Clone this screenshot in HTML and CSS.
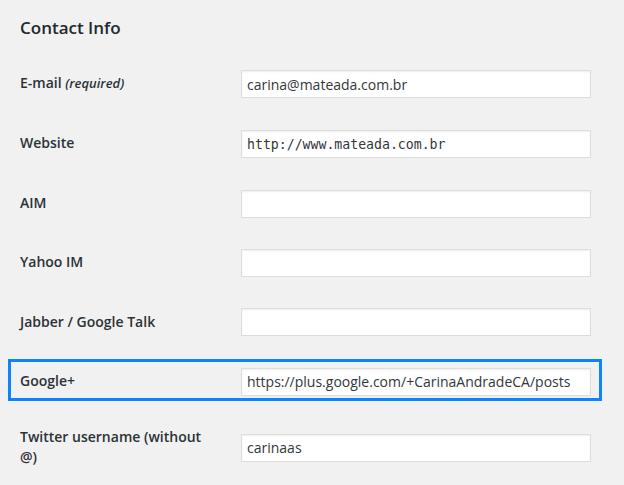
FILE: index.html
```html
<!DOCTYPE html>
<html lang="en">
<head>
<meta charset="utf-8">
<title>Contact Info</title>
<link rel="stylesheet" href="styles.css">
</head>
<body>
<main class="page">
  <h2 class="title">Contact Info</h2>
  <div class="form">
    <div class="row">
      <label class="label" for="email">E-mail <em class="req">(required)</em></label>
      <div class="field"><input class="input" id="email" type="text" value="carina@mateada.com.br"></div>
    </div>
    <div class="row">
      <label class="label" for="url">Website</label>
      <div class="field"><input class="input input-code" id="url" type="text" value="http://www.mateada.com.br"></div>
    </div>
    <div class="row">
      <label class="label" for="aim">AIM</label>
      <div class="field"><input class="input" id="aim" type="text" value=""></div>
    </div>
    <div class="row">
      <label class="label" for="yim">Yahoo IM</label>
      <div class="field"><input class="input" id="yim" type="text" value=""></div>
    </div>
    <div class="row">
      <label class="label" for="jabber">Jabber / Google Talk</label>
      <div class="field"><input class="input" id="jabber" type="text" value=""></div>
    </div>
    <div class="row row-hl">
      <label class="label" for="gplus">Google+</label>
      <div class="field"><input class="input" id="gplus" type="text" value="https://plus.google.com/+CarinaAndradeCA/posts"></div>
    </div>
    <div class="row">
      <label class="label" for="twitter">Twitter username (without @)</label>
      <div class="field"><input class="input" id="twitter" type="text" value="carinaas"></div>
    </div>
  </div>
</main>
</body>
</html>
```

FILE: styles.css
```css
html, body {
  margin: 0;
  padding: 0;
  background: #f1f1f1;
}
body {
  font-family: "Open Sans", "DejaVu Sans", sans-serif;
  font-size: 14px;
  color: #23282d;
  overflow: hidden;
}
.page {
  padding: 17px 0 0 20px;
}
.title {
  margin: 0 0 15px 0;
  font-size: 17px;
  line-height: 22px;
  font-weight: 600;
  color: #23282d;
}
.form {
  display: flex;
  flex-direction: column;
  width: 571px;
}
.row {
  position: relative;
  display: flex;
  align-items: center;
}
.row-hl::before {
  content: "";
  position: absolute;
  left: -12px;
  right: -11px;
  top: 7px;
  bottom: 11px;
  border: 3px solid #0a84ff;
  pointer-events: none;
}
.row-hl {
  margin-bottom: -3px;
}
.row-hl::before {
  bottom: 10px;
}
.label {
  align-self: flex-start;
  width: 200px;
  flex: 0 0 200px;
  margin-right: 21px;
  padding: 19px 0 21px;
  line-height: 19.4px;
  font-weight: 600;
  color: #2c3136;
}
.req {
  font-style: italic;
  font-weight: 600;
  font-size: 13px;
}
.field {
  flex: 1;
  padding: 15px 0;
}
.input {
  display: block;
  box-sizing: border-box;
  width: 350px;
  height: 28px;
  margin: 0;
  padding: 3px 5px;
  border: 1px solid #ddd;
  border-radius: 0;
  background: #fff;
  box-shadow: inset 0 1px 2px rgba(0, 0, 0, 0.07);
  font-family: "Open Sans", "DejaVu Sans", sans-serif;
  font-size: 14px;
  color: #32373c;
  outline: none;
}
.input-code {
  font-family: "DejaVu Sans Mono", "Liberation Mono", monospace;
  font-size: 13.2px;
}
```
